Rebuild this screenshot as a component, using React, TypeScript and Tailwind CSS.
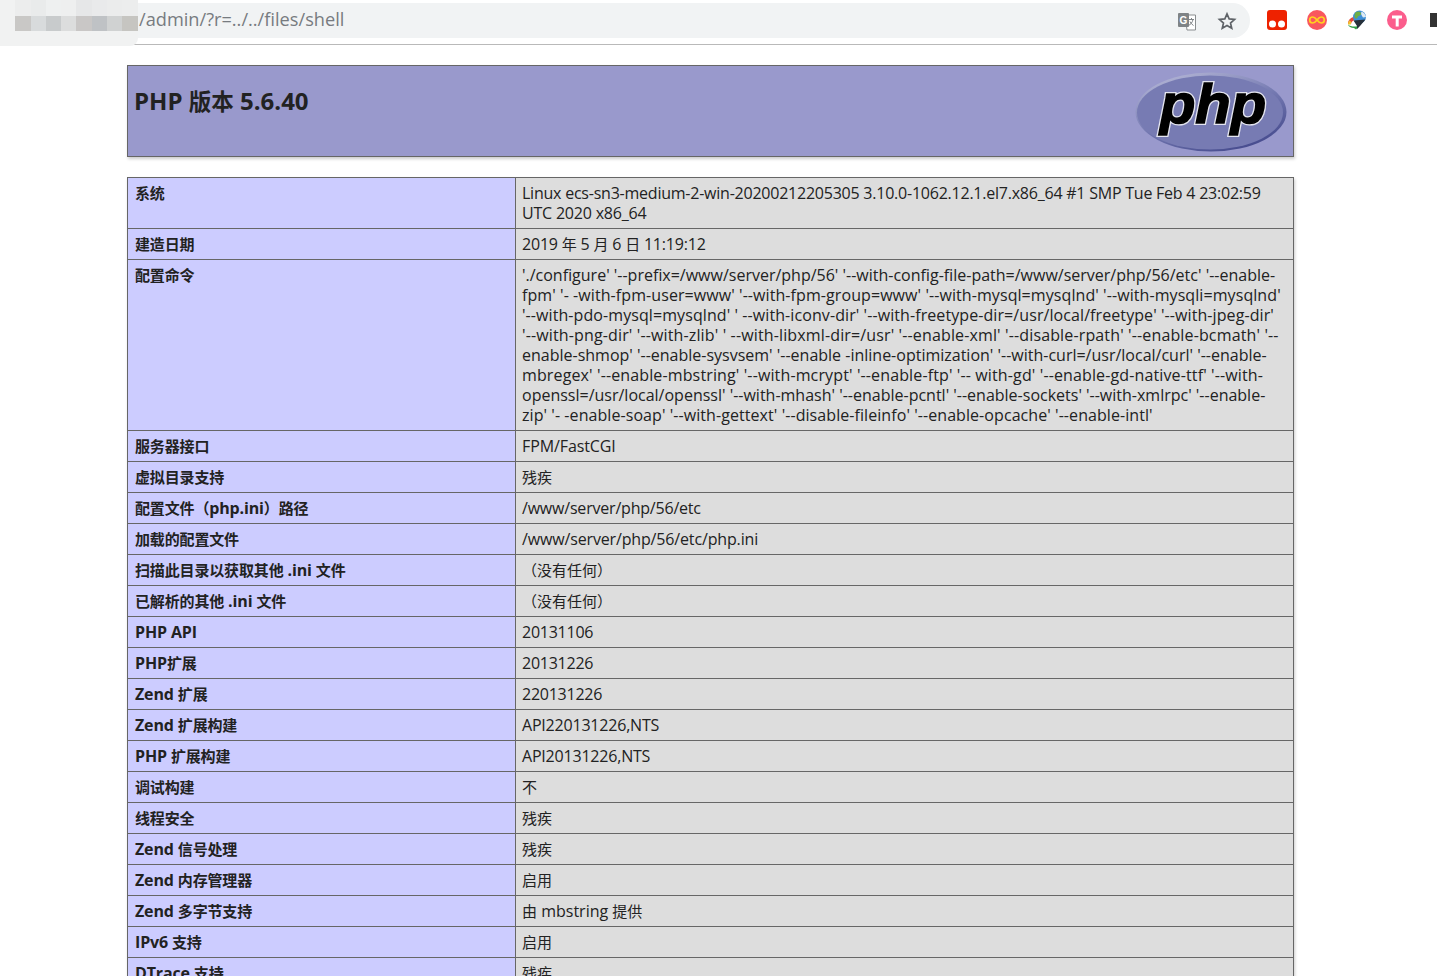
import React from "react";

type Line = [string, string];

const rows: { label: string; lines: Line[] }[] = [
  {
    label: "系统",
    lines: [
      ["Linux ecs-sn3-medium-2-win-20200212205305 3.10.0-1062.12.1.el7.x86_64 #1 SMP Tue Feb 4 23:02:59", "tracking-[-0.23px]"],
      ["UTC 2020 x86_64", "tracking-[-0.2px]"],
    ],
  },
  { label: "建造日期", lines: [["2019 年 5 月 6 日 11:19:12", "tracking-[-0.2px]"]] },
  {
    label: "配置命令",
    lines: [
      ["'./configure' '--prefix=/www/server/php/56' '--with-config-file-path=/www/server/php/56/etc' '--enable-", ""],
      ["fpm' '- -with-fpm-user=www' '--with-fpm-group=www' '--with-mysql=mysqlnd' '--with-mysqli=mysqlnd'", "tracking-[0.08px]"],
      ["'--with-pdo-mysql=mysqlnd' ' --with-iconv-dir' '--with-freetype-dir=/usr/local/freetype' '--with-jpeg-dir'", "tracking-[0.085px]"],
      ["'--with-png-dir' '--with-zlib' ' --with-libxml-dir=/usr' '--enable-xml' '--disable-rpath' '--enable-bcmath' '--", "tracking-[0.14px]"],
      ["enable-shmop' '--enable-sysvsem' '--enable -inline-optimization' '--with-curl=/usr/local/curl' '--enable-", ""],
      ["mbregex' '--enable-mbstring' '--with-mcrypt' '--enable-ftp' '-- with-gd' '--enable-gd-native-ttf' '--with-", "tracking-[0.13px]"],
      ["openssl=/usr/local/openssl' '--with-mhash' '--enable-pcntl' '--enable-sockets' '--with-xmlrpc' '--enable-", ""],
      ["zip' '- -enable-soap' '--with-gettext' '--disable-fileinfo' '--enable-opcache' '--enable-intl'", "tracking-[0.07px]"],
    ],
  },
  { label: "服务器接口", lines: [["FPM/FastCGI", "tracking-[-0.1px]"]] },
  { label: "虚拟目录支持", lines: [["残疾", ""]] },
  { label: "配置文件（php.ini）路径", lines: [["/www/server/php/56/etc", "tracking-[-0.2px]"]] },
  { label: "加载的配置文件", lines: [["/www/server/php/56/etc/php.ini", "tracking-[-0.15px]"]] },
  { label: "扫描此目录以获取其他 .ini 文件", lines: [["（没有任何）", ""]] },
  { label: "已解析的其他 .ini 文件", lines: [["（没有任何）", ""]] },
  { label: "PHP API", lines: [["20131106", "tracking-[-0.25px]"]] },
  { label: "PHP扩展", lines: [["20131226", "tracking-[-0.25px]"]] },
  { label: "Zend 扩展", lines: [["220131226", "tracking-[-0.25px]"]] },
  { label: "Zend 扩展构建", lines: [["API220131226,NTS", "tracking-[-0.2px]"]] },
  { label: "PHP 扩展构建", lines: [["API20131226,NTS", "tracking-[-0.2px]"]] },
  { label: "调试构建", lines: [["不", ""]] },
  { label: "线程安全", lines: [["残疾", ""]] },
  { label: "Zend 信号处理", lines: [["残疾", ""]] },
  { label: "Zend 内存管理器", lines: [["启用", ""]] },
  { label: "Zend 多字节支持", lines: [["由 mbstring 提供", ""]] },
  { label: "IPv6 支持", lines: [["启用", ""]] },
  { label: "DTrace 支持", lines: [["残疾", ""]] },
];

const blurTop = ["#f1f2f2", "#eceded", "#e9ebeb", "#eef0f0", "#eeefef", "#e6e7e8", "#e9eaeb", "#ebecec", "#eceded"];
const blurBottom = ["#f1f2f2", "#c9c8c6", "#d8dbdc", "#c8cbcc", "#dcdddd", "#c9c7c6", "#bfc2c5", "#d0d2d2", "#c6c5c1"];

// chinese runs sit a notch smaller than the latin text around them
const Mixed = ({ text, cjk = "text-[15px]" }: { text: string; cjk?: string }) => (
  <>
    {text.split(/([\u3000-\u9fff\uff00-\uffef]+)/).map((part, i) =>
      i % 2 === 1 ? (
        <span key={i} className={cjk}>
          {part}
        </span>
      ) : (
        part
      ),
    )}
  </>
);

const TranslateIcon = () => (
  <svg width="20" height="20" viewBox="0 0 20 20">
    <path d="M8 4h10.500v15H10z" fill="#fff" stroke="#8a8d8f" />
    <rect x="1" y="2" width="11" height="14" rx="1" fill="#7f8386" />
    <text x="2.500" y="12.500" fontSize="10" fontWeight="700" fill="#fff" fontFamily="'Liberation Sans', sans-serif">
      G
    </text>
    <path d="M12 8.500h5M14.500 7v1.500M16 8.500c-.5 3-2.500 5-4.500 6M13 10.500c.8 1.800 2 3 3.500 4" fill="none" stroke="#7f8386" strokeWidth="1" />
  </svg>
);

const StarIcon = () => (
  <svg width="20" height="20" viewBox="0 0 24 24" fill="none" stroke="#5f6368" strokeWidth="2" strokeLinejoin="miter">
    <path d="M12 3.500l2.600 6 6.500.6-4.900 4.300 1.500 6.400L12 17.400l-5.700 3.400 1.500-6.400-4.900-4.300 6.500-.6z" />
  </svg>
);

const GlobeIcon = () => (
  <svg width="20" height="20" viewBox="0 0 20 20">
    <path d="M1 14c0-4 2.500-6.500 6-7l1 3c-2 .3-3.500 1.500-4 4z" fill="#e5483a" />
    <path d="M1 14.500c0-1.500.5-3 1.500-4.200l2 2c-.4.700-.6 1.500-.6 2.200z" fill="#f2c230" />
    <path d="M1 14.500c2 2 6 2.500 9 1.800l2 .2-3 3-2-1.500c-3 0-5.500-1.500-6-3.500z" fill="#2f9e44" />
    <circle cx="12.500" cy="7" r="6.500" fill="#3f8fd6" />
    <path d="M9 2c2-1.200 5-.5 5 1.800 0 2-3 1.800-3.500 3.700-.3 1.200-1.500 1.500-2.500.5-1-1.800-.5-4.500 1-6z" fill="#6fae45" />
    <path d="M14.500 1.500c2.500 1 4.500 3.500 4.500 5.500l-3 .5c-1-2-2.500-3-1.500-6z" fill="#dfe9f2" />
    <path d="M6.500 10.500L18.500 9.500 13 16l-3 3v-3z" fill="#26303a" />
  </svg>
);

const PhpLogo = () => (
  <svg width="152" height="80" viewBox="0 0 152 80">
    <defs>
      <linearGradient id="rim" x1="0.2" y1="0" x2="0.8" y2="1">
        <stop offset="0" stopColor="#b4b6d6" />
        <stop offset="0.5" stopColor="#7479b1" />
        <stop offset="1" stopColor="#41468a" />
      </linearGradient>
    </defs>
    <ellipse cx="76" cy="40" rx="75.500" ry="39.500" fill="url(#rim)" />
    <ellipse cx="75" cy="40.500" rx="73" ry="37" fill="#777bb3" />
    <text
      x="25"
      y="51"
      fontSize="56"
      fontWeight="700"
      fontStyle="italic"
      stroke="#e4e5ef"
      strokeWidth="4"
      textLength="106"
      lengthAdjust="spacingAndGlyphs"
      fontFamily="'Liberation Sans', sans-serif"
    >
      php
    </text>
    <text
      x="25"
      y="51"
      fontSize="56"
      fontWeight="700"
      fontStyle="italic"
      fill="#000"
      stroke="#000"
      strokeWidth="1.500"
      textLength="106"
      lengthAdjust="spacingAndGlyphs"
      fontFamily="'Liberation Sans', sans-serif"
    >
      php
    </text>
  </svg>
);

export default function App() {
  return (
    <div className="relative h-[976px] overflow-hidden bg-white font-['Open_Sans','Noto_Sans_CJK_SC',sans-serif] text-[#222]">
      <div className="h-[45px] pl-[130px] border-b border-[#b9b9b9] flex items-start [border-image:linear-gradient(to_right,transparent_130px,#b9b9b9_130px)_1]">
        <div className="mt-[3px] h-[35px] w-[1120px] shrink-0 rounded-r-[18px] bg-[#f1f3f4] flex items-center justify-between pl-[9px] pr-[13px]">
          <span className="pb-[2px] text-[18.200px] leading-none text-[#777b80]">/admin/?r=../../files/shell</span>
          <div className="flex items-center gap-[20px]">
            <TranslateIcon />
            <StarIcon />
          </div>
        </div>
        <div className="ml-[17px] mt-[10px] flex shrink-0 items-center gap-[20px]">
          <svg width="20" height="20" viewBox="0 0 20 20">
            <rect width="20" height="20" rx="3" fill="#ee2200" />
            <circle cx="5.500" cy="14" r="3.500" fill="#fff" />
            <circle cx="14.500" cy="14" r="3.500" fill="#fff" />
          </svg>
          <svg width="20" height="20" viewBox="0 0 20 20">
            <circle cx="10" cy="10" r="10" fill="#f9575e" />
            <path d="M10 10c-1.500-2-2.800-3-4.300-3a3 3 0 000 6c1.500 0 2.800-1 4.300-3c1.500-2 2.800-3 4.300-3a3 3 0 010 6c-1.500 0-2.800-1-4.300-3z" fill="none" stroke="#ffd21f" strokeWidth="1.700" />
          </svg>
          <GlobeIcon />
          <svg width="20" height="20" viewBox="0 0 20 20">
            <circle cx="10" cy="10" r="10" fill="#fb5d8c" />
            <path d="M5 5.500h10v3h-3.300v8H8.700v-8H5z" fill="#fff" />
          </svg>
          <div className="ml-[3px] h-[14px] w-[8px] bg-[#333]" />
        </div>
      </div>

      {/* pixelated part of the address */}
      <div className="absolute left-0 top-0 h-[46px] w-[138px] rounded-br-[8px] bg-[#f1f2f2]">
        <div className="flex">
          {blurTop.map((c, i) => (
            <div key={i} className="h-[16px] w-[15.300px]" style={{ backgroundColor: c }} />
          ))}
        </div>
        <div className="flex">
          {blurBottom.map((c, i) => (
            <div key={i} className="h-[15px] w-[15.300px]" style={{ backgroundColor: c }} />
          ))}
        </div>
      </div>

      <div className="mt-[20px] w-[1167px] ml-[127px]">
        <div className="flex h-[92px] items-start justify-between border border-[#666] bg-[#9999cc] pl-[6px] pr-[6px] pt-[6px] shadow-[1px_2px_3px_#ccc]">
          <h1 className="mt-[13px] text-[24px] leading-[32px] font-bold">
            <Mixed text="PHP 版本 5.6.40" cjk="text-[22.500px]" />
          </h1>
          <PhpLogo />
        </div>

        <table className="mt-[20px] w-[1167px] table-fixed border-collapse text-[16px] leading-[20px] shadow-[1px_2px_3px_#ccc]">
          <colgroup>
            <col className="w-[388px]" />
            <col />
          </colgroup>
          <tbody>
            {rows.map((row) => (
              <tr key={row.label}>
                <td className="border border-[#666] bg-[#ccccff] px-[7px] py-[5px] align-top font-bold tracking-[-0.15px] whitespace-nowrap">
                  <Mixed text={row.label} />
                </td>
                <td className="border border-[#666] bg-[#dddddd] pl-[6px] pr-[7px] py-[5px] align-top whitespace-nowrap">
                  {row.lines.map(([text, cls]) => (
                    <div key={text} className={cls}>
                      <Mixed text={text} />
                    </div>
                  ))}
                </td>
              </tr>
            ))}
          </tbody>
        </table>
      </div>
    </div>
  );
}
